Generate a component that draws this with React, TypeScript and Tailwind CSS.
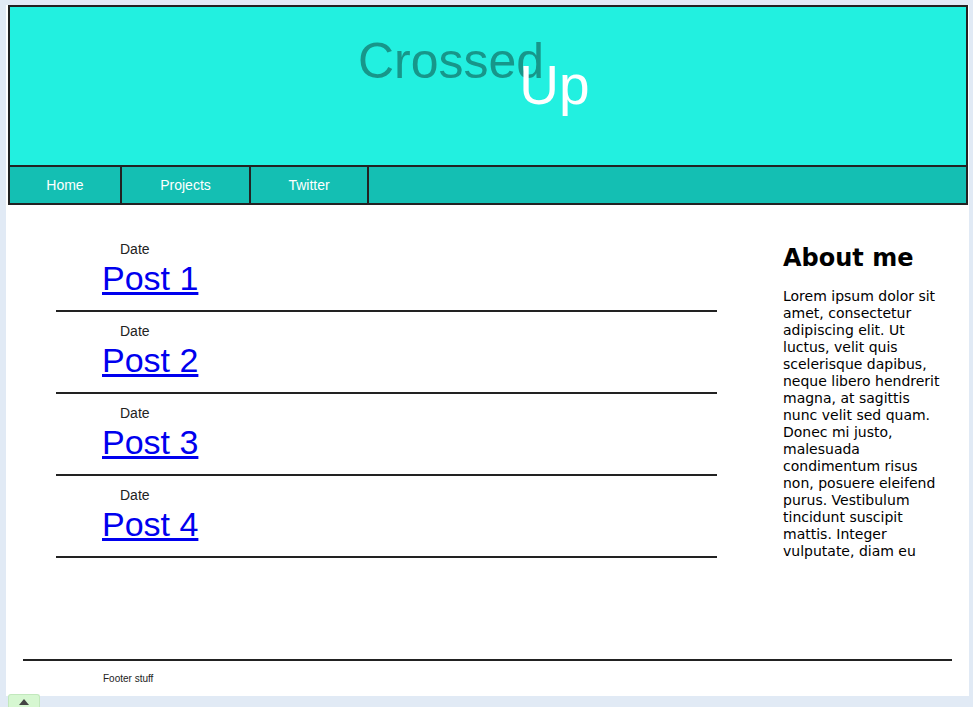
import React from "react";

const posts = ["Post 1", "Post 2", "Post 3", "Post 4"];

const navItems = [
  { label: "Home", w: "w-[112px]" },
  { label: "Projects", w: "w-[129px]" },
  { label: "Twitter", w: "w-[118px]" },
];

const lorem =
  "Lorem ipsum dolor sit amet, consectetur adipiscing elit. Ut luctus, velit quis scelerisque dapibus, neque libero hendrerit magna, at sagittis nunc velit sed quam. Donec mi justo, malesuada condimentum risus non, posuere eleifend purus. Vestibulum tincidunt suscipit mattis. Integer vulputate, diam eu";

const App: React.FC = () => {
  return (
    <div className="relative h-[707px] w-full overflow-hidden bg-[#e1eaf5] pl-[6px] pr-[4px] pt-[5px] font-['Liberation_Sans',Arial,sans-serif]">
      <div className="h-[691px] bg-white">
        {/* header */}
        <header className="ml-[2px] mr-[1px] h-[200px] border-2 border-[#222]">
          <div className="h-[158px] bg-[#22f0e0] pl-[348px] pt-[25px]">
            <h1 className="whitespace-nowrap text-[50px] leading-none text-[#17968a]">
              Crossed
              <span className="relative top-[26px] -ml-[25px] text-[55px] text-white">Up</span>
            </h1>
          </div>
          <nav className="flex h-[38px] border-t-2 border-[#222] bg-[#14bfb3]">
            {navItems.map((item) => (
              <a
                key={item.label}
                href="#"
                className={`${item.w} flex items-center justify-center border-r-2 border-[#222] text-[14px] text-white`}
              >
                {item.label}
              </a>
            ))}
          </nav>
        </header>

        {/* main */}
        <div className="flex h-[454px] pl-[50px] pt-[25px]">
          <div className="w-[661px]">
            {posts.map((p) => (
              <div key={p} className="border-b-2 border-[#222] pt-[11px] pb-[13px]">
                <p className="pl-[64px] text-[14px] leading-[16px] text-[#222]">Date</p>
                <a
                  href="#"
                  className="mt-[2px] ml-[46px] inline-block text-[34px] leading-[38px] text-[#0000ee] underline"
                >
                  {p}
                </a>
              </div>
            ))}
          </div>
          <aside className="ml-[66px] w-[162px] pt-[14px] font-['DejaVu_Sans',Verdana,sans-serif] text-black">
            <h2 className="text-[24px] font-bold leading-[28px]">About me</h2>
            <p className="mt-[16px] text-[14px] leading-[17px]">{lorem}</p>
          </aside>
        </div>

        {/* footer */}
        <footer className="mx-[17px] border-t-2 border-[#222] pl-[80px] pt-[12px]">
          <p className="text-[10px] leading-[12px] text-[#222]">Footer stuff</p>
        </footer>
      </div>

      {/* back-to-top tab */}
      <div className="absolute bottom-0 left-[8px] flex h-[13px] w-[32px] items-start justify-center rounded-t-[3px] border border-b-0 border-[#c2e8bd] bg-[#d6f7d1] pt-[4px]">
        <div className="h-0 w-0 border-x-[5px] border-b-[6px] border-x-transparent border-b-[#444]" />
      </div>
    </div>
  );
};

export default App;
